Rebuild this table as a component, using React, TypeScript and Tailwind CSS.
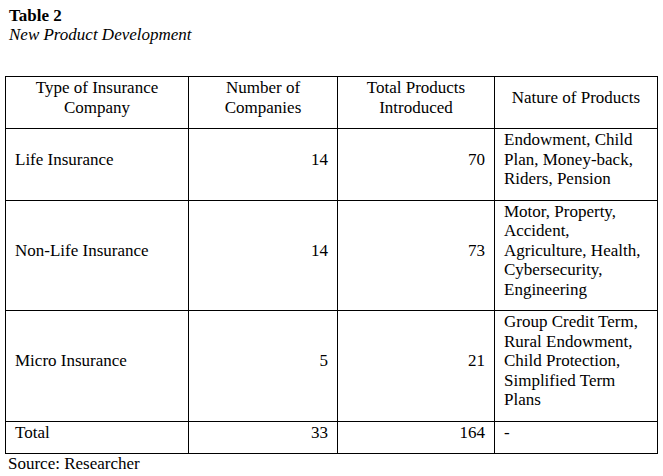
import React from "react";

const cell = "border-r border-b border-black pt-[1px] pb-[11px] px-[9px] flex flex-col justify-center whitespace-nowrap";

type Row = { type: string; num: string; total: string; nature: string[] };

const rows: Row[] = [
  { type: "Life Insurance", num: "14", total: "70", nature: ["Endowment, Child", "Plan, Money-back,", "Riders, Pension"] },
  {
    type: "Non-Life Insurance",
    num: "14",
    total: "73",
    nature: ["Motor, Property,", "Accident,", "Agriculture, Health,", "Cybersecurity,", "Engineering"],
  },
  {
    type: "Micro Insurance",
    num: "5",
    total: "21",
    nature: ["Group Credit Term,", "Rural Endowment,", "Child Protection,", "Simplified Term", "Plans"],
  },
  { type: "Total", num: "33", total: "164", nature: ["-"] },
];

export default function App() {
  return (
    <div
      className="w-[663px] h-[476px] bg-white text-black text-[17px] leading-[19.5px] overflow-hidden"
      style={{ fontFamily: '"Liberation Serif", "Times New Roman", serif' }}
    >
      <div className="pt-[6px] pl-[9px] leading-[19px]">
        <div className="font-bold">Table 2</div>
        <div className="italic">New Product Development</div>
      </div>
      <div className="mt-[32px] ml-[5px] w-[653px] grid grid-cols-[184px_149px_157px_163px] border-black">
        <div className={cell + " text-center border-l border-t"}>
          <span>Type of Insurance</span>
          <span>Company</span>
        </div>
        <div className={cell + " text-center border-t"}>
          <span>Number of</span>
          <span>Companies</span>
        </div>
        <div className={cell + " text-center border-t"}>
          <span>Total Products</span>
          <span>Introduced</span>
        </div>
        <div className={cell + " text-center border-t"}>
          <span>Nature of Products</span>
        </div>
        {rows.map((r) => (
          <React.Fragment key={r.type}>
            <div className={cell + " border-l"}>{r.type}</div>
            <div className={cell + " text-right"}>{r.num}</div>
            <div className={cell + " text-right"}>{r.total}</div>
            <div className={cell}>
              {r.nature.map((n) => (
                <span key={n}>{n}</span>
              ))}
            </div>
          </React.Fragment>
        ))}
      </div>
      <div className="pl-[8px]">Source: Researcher</div>
    </div>
  );
}
